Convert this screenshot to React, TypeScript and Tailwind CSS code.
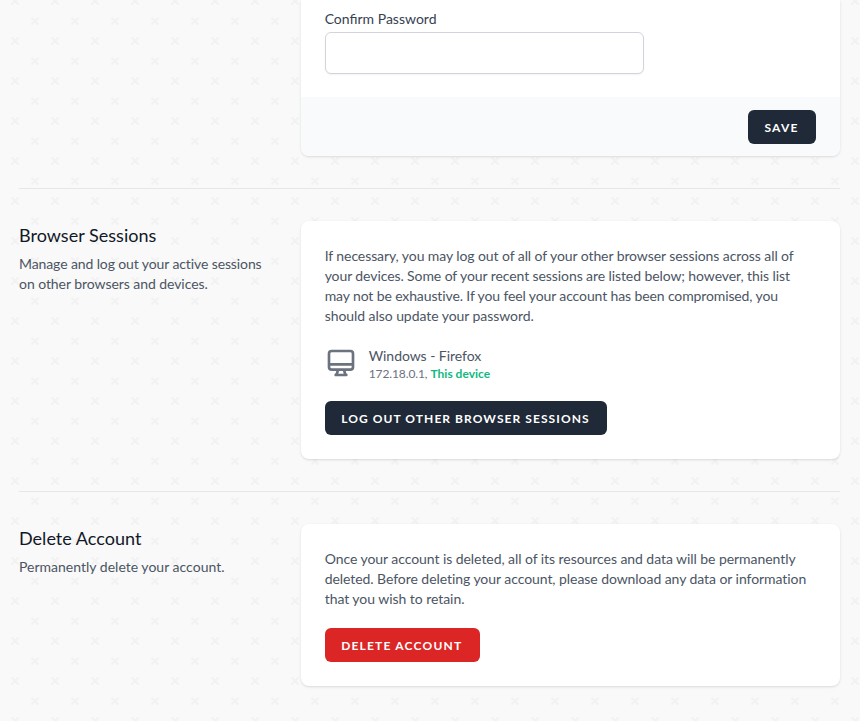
import type { ReactNode } from "react";

function CrossPattern() {
  return (
    <svg className="absolute inset-0 -z-10 h-full w-full" aria-hidden="true">
      <defs>
        <pattern id="crosses" width="40" height="40" patternUnits="userSpaceOnUse" x="15" y="1">
          <path
            fill="#f2f2f2"
            fillRule="evenodd"
            d="M0 38.59l2.83-2.83 1.41 1.41L1.41 40H0v-1.41zM0 1.4l2.83 2.83 1.41-1.41L1.41 0H0v1.41zM38.59 40l-2.83-2.83 1.41-1.41L40 38.59V40h-1.41zM40 1.41l-2.83 2.83-1.41-1.41L38.59 0H40v1.41zM20 18.6l2.83-2.83 1.41 1.41L21.41 20l2.83 2.83-1.41 1.41L20 21.41l-2.83 2.83-1.41-1.41L18.59 20l-2.83-2.83 1.41-1.41L20 18.59z"
          />
        </pattern>
      </defs>
      <rect width="100%" height="100%" fill="url(#crosses)" />
    </svg>
  );
}

function Divider() {
  return (
    <div className="py-8">
      <div className="border-t border-[#e5e7eb]" />
    </div>
  );
}

function Button({ className, children }: { className: string; children: ReactNode }) {
  return (
    <button
      type="button"
      className={
        "inline-flex items-center rounded-md border border-transparent pt-[9px] pr-4 pb-[7px] pl-[15.5px] text-xs font-bold text-white uppercase " +
        className
      }
    >
      {children}
    </button>
  );
}

type TextLine = { text: string; tracking: string };

function Lines({ lines }: { lines: TextLine[] }) {
  return (
    <>
      {lines.map((line) => (
        <span key={line.text} className={"block whitespace-nowrap [font-variant-ligatures:none] " + line.tracking}>
          {line.text}
        </span>
      ))}
    </>
  );
}

function Section({ title, description, children }: { title: string; description: TextLine[]; children: ReactNode }) {
  return (
    <section className="grid grid-cols-3 gap-6">
      <div>
        <h3 className="text-lg tracking-[0.02px] text-[#111827]">{title}</h3>
        <p className="mt-[5px] text-sm text-[#4b5563]">
          <Lines lines={description} />
        </p>
      </div>
      <div className="col-span-2 rounded-lg bg-white p-6 shadow-sm">{children}</div>
    </section>
  );
}

function DesktopIcon() {
  return (
    <svg
      className="h-8 w-8 text-[#6b7280]"
      fill="none"
      stroke="currentColor"
      strokeWidth="2"
      strokeLinecap="round"
      strokeLinejoin="round"
      viewBox="0 0 24 24"
    >
      <path d="M9.75 17L9 20l-1 1h8l-1-1-.75-3M3 13h18M5 17h14a2 2 0 002-2V5a2 2 0 00-2-2H5a2 2 0 00-2 2v10a2 2 0 002 2z" />
    </svg>
  );
}

const sessionsDescription: TextLine[] = [
  { text: "Manage and log out your active sessions", tracking: "tracking-[-0.11px]" },
  { text: "on other browsers and devices.", tracking: "tracking-[-0.06px]" },
];

const sessionsText: TextLine[] = [
  {
    text: "If necessary, you may log out of all of your other browser sessions across all of",
    tracking: "tracking-[-0.085px]",
  },
  {
    text: "your devices. Some of your recent sessions are listed below; however, this list",
    tracking: "tracking-[-0.09px]",
  },
  {
    text: "may not be exhaustive. If you feel your account has been compromised, you",
    tracking: "tracking-[-0.12px]",
  },
  { text: "should also update your password.", tracking: "tracking-[-0.06px]" },
];

const deleteDescription: TextLine[] = [{ text: "Permanently delete your account.", tracking: "tracking-[0.01px]" }];

const deleteText: TextLine[] = [
  {
    text: "Once your account is deleted, all of its resources and data will be permanently",
    tracking: "tracking-[-0.06px]",
  },
  {
    text: "deleted. Before deleting your account, please download any data or information",
    tracking: "tracking-[-0.06px]",
  },
  { text: "that you wish to retain.", tracking: "tracking-[-0.05px]" },
];

export default function App() {
  return (
    <div className="relative isolate h-[721px] w-full overflow-hidden bg-[#f9f9f9] font-[Lato,sans-serif]">
      <CrossPattern />
      <main className="ml-[19px] w-[821px]">
        <section className="grid grid-cols-3 gap-6">
          <form className="col-span-2 col-start-2 rounded-b-lg bg-white shadow-sm">
            <div className="grid grid-cols-6 gap-6 px-6 pt-[9px] pb-[23px]">
              <div className="col-span-4">
                <label htmlFor="confirm" className="block text-sm text-[#374151]">
                  Confirm Password
                </label>
                <input
                  id="confirm"
                  type="password"
                  className="mt-[3px] block h-[42px] w-full rounded-md border border-[#d1d5db] bg-white px-3 shadow-xs"
                />
              </div>
            </div>
            <div className="flex justify-end rounded-b-lg bg-[#f9fafb] px-6 pt-[13px] pb-3">
              <Button className="w-[68px] bg-[#1f2937] tracking-[1.2px]">Save</Button>
            </div>
          </form>
        </section>

        <Divider />

        <Section title="Browser Sessions" description={sessionsDescription}>
          <p className="pt-px text-sm text-[#4b5563]">
            <Lines lines={sessionsText} />
          </p>
          <div className="mt-[19px] flex items-center">
            <DesktopIcon />
            <div className="ml-3 -mb-px pt-px">
              <div className="text-sm tracking-[-0.05px] text-[#4b5563]">Windows - Firefox</div>
              <div className="text-xs text-[#6b7280]">
                <span className="tracking-[-0.1px]">172.18.0.1, </span>
                <span className="font-bold text-[#10b981]">This device</span>
              </div>
            </div>
          </div>
          <div className="mt-5 flex">
            <Button className="w-[282px] bg-[#1f2937] tracking-[1.07px] whitespace-nowrap">
              Log Out Other Browser Sessions
            </Button>
          </div>
        </Section>

        <Divider />

        <Section title="Delete Account" description={deleteDescription}>
          <p className="pt-px text-sm text-[#4b5563]">
            <Lines lines={deleteText} />
          </p>
          <div className="mt-[19px] flex">
            <Button className="w-[155px] bg-[#dc2626] tracking-[1.2px] whitespace-nowrap">Delete Account</Button>
          </div>
        </Section>
      </main>
    </div>
  );
}
